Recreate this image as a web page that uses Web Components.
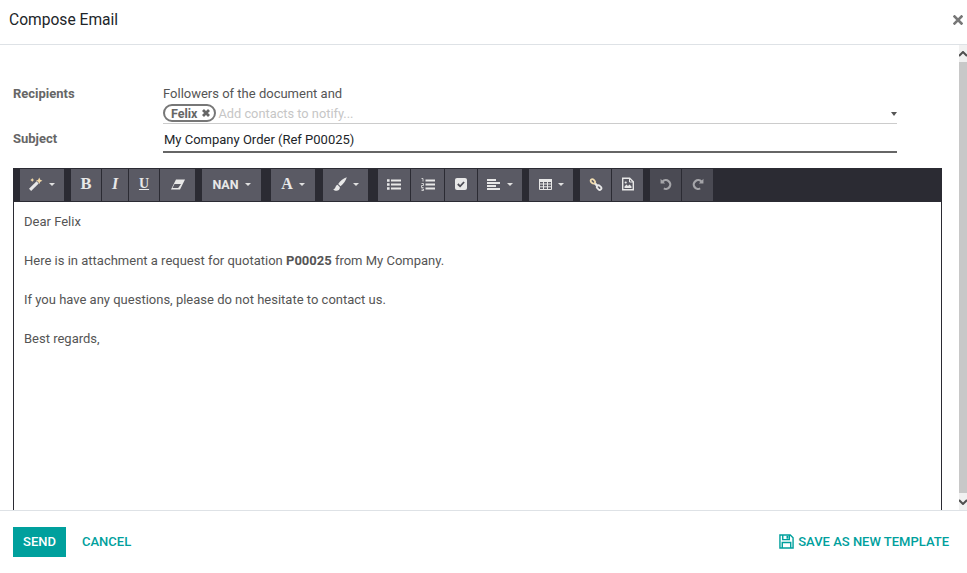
<!DOCTYPE html>
<html>
<head>
<meta charset="utf-8">
<title>Compose Email</title>
<style>
    html, body { margin: 0; padding: 0; height: 100%; background: #fff; overflow: hidden; }
    body { font-family: Roboto, "Noto Sans", sans-serif; }
</style>
</head>
<body>
<compose-dialog title-text="Compose Email">
    <mail-field label="Recipients" kind="recipients"></mail-field>
    <mail-field label="Subject" kind="subject"></mail-field>
    <editor-toolbar></editor-toolbar>
    <mail-body>
        <p>Dear Felix</p>
        <p>Here is in attachment a request for quotation <b>P00025</b> from My Company.</p>
        <p>If you have any questions, please do not hesitate to contact us.</p>
        <p>Best regards,</p>
    </mail-body>
</compose-dialog>

<script>
class ComposeDialog extends HTMLElement {
    connectedCallback() {
        this.attachShadow({ mode: 'open' });
        this.shadowRoot.innerHTML = `
            <style>
                :host {
                    display: flex;
                    flex-direction: column;
                    height: 573px;
                    width: 967px;
                    color: #4c4c4c;
                    font-size: 13px;
                }
                header {
                    flex: 0 0 45px;
                    display: flex;
                    justify-content: space-between;
                    align-items: center;
                    border-bottom: 1px solid #dee2e6;
                    padding: 0 4px 4px 9px;
                    box-sizing: border-box;
                }
                h4 { margin: 0; font-size: 15.6px; font-weight: 400; color: #212529; }
                .close { display: block; width: 10px; height: 10px; }
                .middle { flex: 1; display: flex; min-height: 0; }
                main {
                    flex: 1;
                    min-width: 0;
                    padding: 38px 17px 0 13px;
                    overflow: hidden;
                    display: flex;
                    flex-direction: column;
                }
                .scrollbar {
                    flex: 0 0 8px;
                    display: flex;
                    flex-direction: column;
                    justify-content: space-between;
                    background: #f1f1f1;
                    position: relative;
                }
                .scrollbar .thumb { flex: 1; background: #c8c8c8; margin-bottom: 17px; }
                .arrow { flex: 0 0 17px; display: flex; align-items: center; justify-content: center; overflow: hidden; }
                .arrow svg { flex: none; }
                footer {
                    flex: 0 0 63px;
                    border-top: 1px solid #dee2e6;
                    display: flex;
                    align-items: flex-start;
                    padding: 16px 18px 0 13px;
                    box-sizing: border-box;
                    gap: 16px;
                    font-size: 13px;
                    font-weight: 500;
                    text-transform: uppercase;
                }
                .btn { height: 30px; box-sizing: border-box; padding-bottom: 2px; display: flex; align-items: center; color: #00a09d; }
                .send { background: #00a09d; color: #fff; width: 53px; justify-content: center; }
                .save { margin-left: auto; gap: 4px; }
                .save svg { width: 15px; height: 15px; }
            </style>
            <header>
                <h4>${this.getAttribute('title-text')}</h4>
                <svg class="close" viewBox="0 0 10 10"><path d="M1.500 1.500l7 7M8.500 1.500l-7 7" stroke="#777" stroke-width="2.600" stroke-linecap="square"/></svg>
            </header>
            <div class="middle">
                <main><slot></slot></main>
                <div class="scrollbar">
                    <div class="arrow"><svg width="8" height="6" viewBox="0 0 8 6"><path d="M0 5l4-4 4 4" fill="none" stroke="#505050" stroke-width="2"/></svg></div>
                    <div class="thumb"></div>
                    <div class="arrow" style="position:absolute;left:0;right:0;bottom:0;height:17px"><svg width="8" height="6" viewBox="0 0 8 6"><path d="M0 1l4 4 4-4" fill="none" stroke="#505050" stroke-width="2"/></svg></div>
                </div>
            </div>
            <footer>
                <div class="btn send">Send</div>
                <div class="btn">Cancel</div>
                <div class="btn save">
                    <svg viewBox="0 0 16 16"><path d="M1 1h11l3 3v11H1z M4 1v5h7V1 M3.500 15V9h9v6" fill="none" stroke="#00a09d" stroke-width="1.500"/><rect x="8" y="2" width="2" height="3" fill="#00a09d"/></svg>
                    Save as new template
                </div>
            </footer>
        `;
    }
}

class MailField extends HTMLElement {
    connectedCallback() {
        this.attachShadow({ mode: 'open' });
        const recipients = this.getAttribute('kind') === 'recipients';
        this.shadowRoot.innerHTML = `
            <style>
                :host { display: grid; grid-template-columns: 150px 1fr; font-size: 13px; color: #4c4c4c; margin-right: 45px; }
                label { font-weight: 700; color: #666; line-height: 20px; }
                .note { height: 19px; padding-top: 1px; line-height: 20px; color: #555; }
                .tags {
                    height: 20px;
                    display: flex;
                    align-items: center;
                    border-bottom: 1px solid #ccc;
                    box-sizing: content-box;
                    position: relative;
                }
                .chip {
                    display: flex;
                    align-items: center;
                    gap: 4px;
                    height: 14px;
                    border: 2px solid #777;
                    border-radius: 9px;
                    padding: 0 3px 0 6px;
                    font-size: 12.500px;
                    font-weight: 700;
                    color: #666;
                    margin-right: 2px;
                }
                .chip svg { width: 10px; height: 10px; }
                .placeholder { color: #c6c6c6; font-size: 12.800px; }
                .caret { position: absolute; right: 0; top: 9px; border: 3px solid transparent; border-top: 4px solid #555; border-bottom: 0; }
                .subject {
                    height: 24px;
                    line-height: 25px;
                    padding: 3px 0 0 1px;
                    border-bottom: 2px solid #666;
                    color: #212529;
                }
            </style>
            <label style="${recipients ? 'margin-top:1px' : 'margin-top:5px'}">${this.getAttribute('label')}</label>
            ${recipients ? `
            <div>
                <div class="note">Followers of the document and</div>
                <div class="tags">
                    <span class="chip">Felix <svg viewBox="0 0 10 10"><path d="M2 2l6 6M8 2l-6 6" stroke="#666" stroke-width="2.800"/></svg></span>
                    <span class="placeholder">Add contacts to notify...</span>
                    <span class="caret"></span>
                </div>
            </div>` : `<div class="subject">My Company Order (Ref P00025)</div>`}
        `;
    }
}

// gap before the group, then width of every button in px
const TOOLBAR_GROUPS = [
    [7, [['magic', 44]]],
    [7, [['bold', 31], ['italic', 27], ['underline', 31], ['eraser', 35]]],
    [7, [['nan', 59]]],
    [10, [['font', 44]]],
    [8, [['brush', 45]]],
    [10, [['ul', 33], ['ol', 34], ['check', 33], ['align', 44]]],
    [7, [['table', 44]]],
    [7, [['link', 32], ['picture', 31]]],
    [7, [['undo', 32], ['redo', 31]]]
];

const CARET = '<i class="caret"></i>';
const WHITE = '#e8e8e8';
const TOOL_ICONS = {
    magic: `<svg width="14" height="14" viewBox="0 0 13 13"><path d="M1 12L8 5" stroke="${WHITE}" stroke-width="2.800"/><path d="M9.500 0.500l1 2 2 1-2 1-1 2-1-2-2-1 2-1zM3 1l.6 1.200 1.200.6-1.200.6L3 4.600l-.6-1.200-1.200-.6 1.200-.6z" fill="#f2d9a8"/></svg>${CARET}`,
    bold: `<span class="serif" style="font-weight:700;font-size:16.500px">B</span>`,
    italic: `<span class="serif" style="font-style:italic;font-weight:700;font-size:16px">I</span>`,
    underline: `<span class="serif" style="font-weight:700;font-size:14px;text-decoration:underline">U</span>`,
    eraser: `<svg width="14" height="11" viewBox="0 0 14 11"><path d="M5 .5h9L9 10.500H0z" fill="${WHITE}"/><path d="M3.500 5h6.500l-2.800 4H1.500z" fill="#5a5a64"/></svg>`,
    nan: `<span style="font-weight:700;font-size:12.500px">NAN</span>${CARET}`,
    font: `<span class="serif" style="font-weight:700;font-size:16px">A</span>${CARET}`,
    brush: `<svg width="14" height="14" viewBox="0 0 13 13"><path d="M12.800 .2C10 1 6.500 3.500 4.800 6.500L7 8.500C9.800 6.500 12.200 3 12.800.2zM4.200 7.200C2 7.800 2.800 11 .2 11.500 2 13.500 7 13.300 6.300 9.300z" fill="${WHITE}"/></svg>${CARET}`,
    ul: `<svg width="14" height="11" viewBox="0 0 14 11"><path d="M4 1.500H14M4 5.500H14M4 9.500H14" stroke="${WHITE}" stroke-width="2.200"/><path d="M0 .2h2.600v2.600H0zM0 4.200h2.600v2.600H0zM0 8.200h2.600v2.600H0z" fill="${WHITE}"/></svg>`,
    ol: `<svg width="14" height="13" viewBox="0 0 14 13"><path d="M4.500 2.500H14M4.500 6.500H14M4.500 10.500H14" stroke="${WHITE}" stroke-width="2.200"/><path d="M.5 .5h1.500v3M.5 5.500h2v2h-2v2h2M.5 11h2v1.500h-2" fill="none" stroke="${WHITE}" stroke-width=".8"/></svg>`,
    check: `<svg width="12" height="12" viewBox="0 0 12 12"><rect width="12" height="12" rx="2" fill="${WHITE}"/><path d="M2.800 6l2.300 2.300 4-4.300" fill="none" stroke="#4c4c55" stroke-width="1.800"/></svg>`,
    align: `<svg width="14" height="11" viewBox="0 0 14 11"><path d="M0 1h9M0 4h13M0 7h9M0 10h13" stroke="${WHITE}" stroke-width="2"/></svg>${CARET}`,
    table: `<svg width="13" height="11" viewBox="0 0 13 11"><path d="M.5.5h12v10H.5z" fill="none" stroke="${WHITE}"/><path d="M.5 5h12M.5 7.800h12M4.500 1v9M8.500 1v9" fill="none" stroke="${WHITE}"/><rect width="13" height="3" fill="${WHITE}"/></svg>${CARET}`,
    link: `<svg width="14" height="13" viewBox="0 0 13 13"><path d="M4 4l5 5" stroke="${WHITE}" stroke-width="2.400"/><rect x=".9" y="1.700" width="5" height="3.400" rx="1.700" transform="rotate(45 3.400 3.400)" fill="#5a5a64" stroke="#f0dcb0" stroke-width="1.800"/><rect x="7.100" y="7.900" width="5" height="3.400" rx="1.700" transform="rotate(45 9.600 9.600)" fill="#5a5a64" stroke="${WHITE}" stroke-width="1.800"/></svg>`,
    picture: `<svg width="12" height="14" viewBox="0 0 12 13"><path d="M.7.7h7l3.600 3.600v8H.7z" fill="none" stroke="${WHITE}" stroke-width="1.400"/><path d="M7.500.7v3.800h3.800" fill="none" stroke="${WHITE}"/><path d="M2.500 10.500V9l2-2 1.500 1.500 1.500-1.500 2 2v1.500z" fill="${WHITE}"/><circle cx="3.700" cy="5" r="1.100" fill="${WHITE}"/></svg>`,
    undo: `<svg width="12" height="12" viewBox="0 0 11 11"><path d="M2.400 3.300A4 4 0 1 1 3.500 9.500" fill="none" stroke="#a5a5a9" stroke-width="2"/><path d="M.5 .8l0 4.200h4.200z" fill="#a5a5a9"/></svg>`,
    redo: `<svg width="12" height="12" viewBox="0 0 11 11"><path d="M8.600 3.300A4 4 0 1 0 7.500 9.500" fill="none" stroke="#a5a5a9" stroke-width="2"/><path d="M10.500 .8l0 4.200H6.300z" fill="#a5a5a9"/></svg>`
};

class EditorToolbar extends HTMLElement {
    connectedCallback() {
        this.attachShadow({ mode: 'open' });
        const groups = TOOLBAR_GROUPS.map(([gap, group]) => `
            <div class="group" style="margin-left:${gap}px">
                ${group.map(([name, width]) => `<div class="tool ${name}" style="width:${width}px">${TOOL_ICONS[name]}</div>`).join('')}
            </div>`).join('');
        this.shadowRoot.innerHTML = `
            <style>
                :host {
                    display: flex;
                    height: 34px;
                    box-sizing: border-box;
                    margin-top: 15px;
                    padding: 1px 0;
                    background: #2b2b33;
                    flex: none;
                }
                .group { display: flex; }
                .tool {
                    display: flex;
                    align-items: center;
                    justify-content: center;
                    gap: 6px;
                    box-sizing: border-box;
                    padding-bottom: 2px;
                    background: #5a5a64;
                    border-right: 1px solid #2b2b33;
                    color: ${WHITE};
                }
                .tool:last-child { border-right: 0; }
                .undo, .redo { background: #4a4a53; }
                .serif { font-family: "Liberation Serif", serif; line-height: 1; }
                .caret { display: block; border: 3px solid transparent; border-top: 3px solid #e0e0e0; border-bottom: 0; }
            </style>
            ${groups}
        `;
    }
}

class MailBody extends HTMLElement {
    connectedCallback() {
        this.attachShadow({ mode: 'open' });
        this.shadowRoot.innerHTML = `
            <style>
                :host {
                    display: block;
                    flex: 1;
                    border: 1px solid #2b2b33;
                    border-width: 0 1px;
                    padding: 11px 10px 0 10px;
                    font-size: 13px;
                    line-height: 17px;
                    color: #555;
                }
                ::slotted(p) { margin: 0 0 22px 0; }
            </style>
            <slot></slot>
        `;
    }
}

customElements.define('compose-dialog', ComposeDialog);
customElements.define('mail-field', MailField);
customElements.define('editor-toolbar', EditorToolbar);
customElements.define('mail-body', MailBody);
</script>
</body>
</html>
